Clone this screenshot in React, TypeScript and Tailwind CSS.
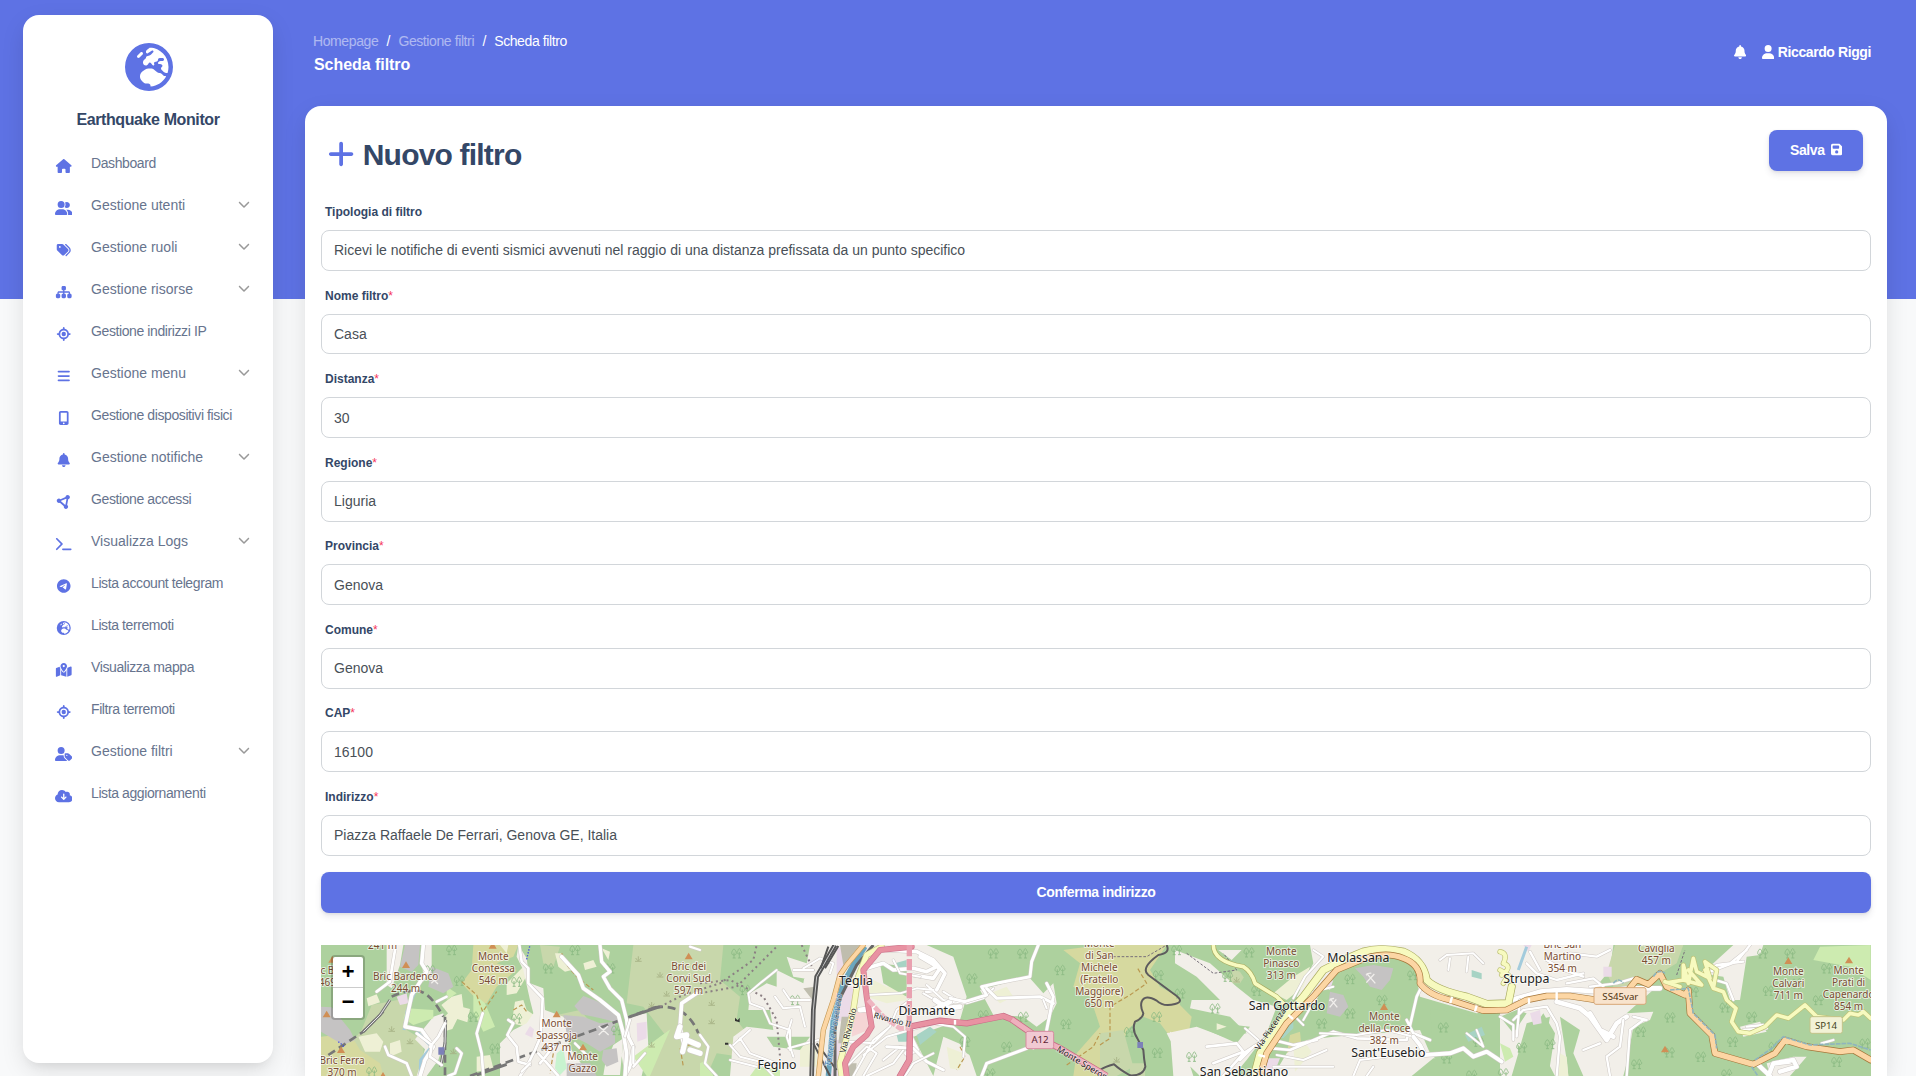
import type { ReactNode } from "react";
import type { IconType } from "react-icons";
import {
  FaBars, FaBell, FaChevronDown, FaCircleNodes, FaCloudArrowDown, FaEarthEurope, FaFloppyDisk, FaHouse,
  FaLocationCrosshairs, FaMapLocationDot, FaMobileScreenButton, FaPlus, FaSitemap, FaTags, FaTelegram,
  FaTerminal, FaUser, FaUserGroup, FaUserTag,
} from "react-icons/fa6";

const nav: [string, IconType, boolean][] = [
  ["Dashboard", FaHouse, false],
  ["Gestione utenti", FaUserGroup, true],
  ["Gestione ruoli", FaTags, true],
  ["Gestione risorse", FaSitemap, true],
  ["Gestione indirizzi IP", FaLocationCrosshairs, false],
  ["Gestione menu", FaBars, true],
  ["Gestione dispositivi fisici", FaMobileScreenButton, false],
  ["Gestione notifiche", FaBell, true],
  ["Gestione accessi", FaCircleNodes, false],
  ["Visualizza Logs", FaTerminal, true],
  ["Lista account telegram", FaTelegram, false],
  ["Lista terremoti", FaEarthEurope, false],
  ["Visualizza mappa", FaMapLocationDot, false],
  ["Filtra terremoti", FaLocationCrosshairs, false],
  ["Gestione filtri", FaUserTag, true],
  ["Lista aggiornamenti", FaCloudArrowDown, false],
];

const fields: [string, string, boolean][] = [
  ["Tipologia di filtro", "Ricevi le notifiche di eventi sismici avvenuti nel raggio di una distanza prefissata da un punto specifico", false],
  ["Nome filtro", "Casa", true],
  ["Distanza", "30", true],
  ["Regione", "Liguria", true],
  ["Provincia", "Genova", true],
  ["Comune", "Genova", true],
  ["CAP", "16100", true],
  ["Indirizzo", "Piazza Raffaele De Ferrari, Genova GE, Italia", true],
];

function Road({ d, w, fill, edge, edgeW = 4 }: { d: string; w: number; fill: string; edge: string; edgeW?: number }) {
  return (
    <g fill="none" strokeLinejoin="round" strokeLinecap="round">
      <path d={d} stroke={edge} strokeWidth={w + edgeW} />
      <path d={d} stroke={fill} strokeWidth={w} />
    </g>
  );
}
const White = ({ d, w = 7 }: { d: string; w?: number }) => <Road d={d} w={w} fill="#ffffff" edge="#cfcac6" edgeW={3} />;

function Trees({ at }: { at: [number, number][] }) {
  return (
    <g fill="none" stroke="#8bb983" strokeWidth="2.6">
      {at.map(([x, y]) => (
        <path key={`${x}-${y}`} transform={`translate(${x} ${y})`} d="M-8 14V-2M-12 14h9M-8 5c-9 0-8-8-4-14c2-5 6-5 8 0c4 6 5 14-4 14M8 14V-4M4 14h9M8 2c-9 0-7-7-4-10c1-8 7-8 8 0c4 3 5 10-4 10" />
      ))}
    </g>
  );
}
function Scrubs({ at }: { at: [number, number][] }) {
  return (
    <g fill="none" stroke="#a5b083" strokeWidth="2.5">
      {at.map(([x, y]) => (
        <path key={`${x}-${y}`} transform={`translate(${x} ${y})`} d="M-10 6H10M0 5V-9M-2 4L-8-4M2 4L8-4" />
      ))}
    </g>
  );
}
function Peaks({ at }: { at: [number, number][] }) {
  return (
    <g fill="#d08f55">
      {at.map(([x, y]) => (
        <path key={`${x}-${y}`} d={`M${x} ${y - 10}l12 20h-24z`} />
      ))}
    </g>
  );
}
function Label({ x, y, lines, town }: { x: number; y: number; lines: string[]; town?: boolean }) {
  return (
    <g
      className="font-['Noto_Sans',sans-serif]"
      textAnchor="middle"
      fontSize={town ? 37 : 30}
      fill={town ? "#222222" : "#7a4d33"}
      stroke="#ffffff"
      strokeOpacity="0.65"
      strokeWidth="6"
      strokeLinejoin="round"
      paintOrder="stroke"
    >
      {lines.map((t, i) => (
        <text key={i} x={x} y={y + i * 36}>{t}</text>
      ))}
    </g>
  );
}
const Tile = ({ i, children }: { i: number; children: ReactNode }) => <g transform={`translate(${i * 1200} 0)`}>{children}</g>;

const forest = "#add19e", scrub = "#c8d7ab", heath = "#d6d99f", urban = "#f2efe9", grass = "#cdebb0", farm = "#eef0d5", quarry = "#c5c3c3", lilac = "#ebdbe8";

function TerrainMap() {
  return (
    <svg className="block h-full w-full" viewBox="63 75 4650 393" preserveAspectRatio="none">
      <rect x="63" y="75" width="4650" height="393" fill={forest} />

      {/* Land cover */}
      <Tile i={0}>
        <path fill={scrub} d="M215 255L320 235L320 330L370 360L370 468H230L190 420L130 395L185 330z M1000 75H1200V468H1050L1100 350L1030 260L980 250z M770 285L840 270L900 340L850 360L790 310z M720 75l60 5l-20 60l-30 -10z" />
        <path fill={heath} d="M520 75H655L640 110L590 130L650 150L590 200L560 250L540 250L485 190L515 150z M63 350L150 340L180 390L240 430L250 468H63z M1150 380l50-40v100l-30 28h-40z" />
        <path fill={farm} d="M200 235l30-12l10 24l-35 12z M455 230l30-8l5 40l20 5l-8 40l-30-10l-15 30l-28 8l-10-30l25-25l-20-25z M175 350l55-10l20 25l-10 30l-45 0z M270 370l30-10l5 35l-35 15z M765 100l20 0l30 50l-20 5l-20-15z M850 130l30-10l10 20l-35 10z M600 75h25l-5 25z M620 190l50-50l20 10l-40 70l-30 5z M645 245l25-5l10 30l30 20l-30 30l-45-10z M905 85l25 10l-5 25z M530 410l40-5l10 40l-50 10z" />
        <path fill={urban} d="M655 75L680 115L690 190L730 205L735 270L790 290L830 330L800 380L730 415L690 468H600L600 370L640 330L680 310L700 280L690 240L670 150L650 110z M260 75h50l-10 60l-25 70l-15-10z M365 75h30v80l-25 30z M400 290l30-10l5 80l-20 60l-35 48h-30l25-80l-30-30z M980 290l60-10l5 100l-20 88h-50l-10-60z M940 375l30-20l-10 110h-50l5-30z M1140 260l30-40l30-10v60l-40 60z M720 350l80 20l70 98h-180z" />
        <path fill={grass} d="M320 265l80 5l0 25l-60 20l-30-20z M520 220l35 30l30 70l-35 15l-30-60z M1000 410L1080 350L1150 300L1165 330L1130 400L1080 468H1040z M440 200l30 20l-30 20z" />
        <path fill={quarry} d="M63 260L95 262L150 330L165 360L130 375L63 335z M315 75h45l-5 60l-20 20l-35-15z M395 140l50 20l15 40l-30 20l-45-20z M850 228l40 15l70 40l-5 25l-60 -15l-50-10l-22-25z M790 285L850 290L900 310L945 305L945 370L900 395L860 370L800 340z M910 390l40-5l5 40l-35 15l-15-20z M800 430h70l20 38h-90z" />
        <path fill={lilac} d="M690 318l12 10l-5 25l-22-10z M1010 310l30-5l0 50l-28 10z M290 230l30-10l5 30l-25 5z" />
        <path fill="#c8f3cf" d="M770 400l20-15l10 60l-20 20l-15-20z" />
      </Tile>
      <Tile i={1}>
        <path fill={scrub} d="M0 75H70L60 180L120 230L110 300L140 340L120 410L50 400L20 468H-150L-60 260z M300 210l40-10v70l-30 0z" />
        <path fill={urban} d="M230 150L310 190L330 75H680L760 110L800 230L780 300L640 350L700 468H90L100 350L140 320L220 330L210 270L145 270L150 220L200 190L230 200z M260 110l60 20l20 50l-60-10z M840 210l90-25l60-10l40 45l30-30l10 60l-20 40l-40 30l-40-30l-90-5z M730 350l70 30l30 88H700z" />
        <path fill={farm} d="M520 180l40 20l40-10l20 50l-60 10l-60-20z M870 220l50-20l20 30l-40 20z M740 380l50 20l-10 50l-30-5z M300 360l50 20l0 60l-50 0z" />
        <path fill={forest} d="M640 360L730 330L880 330L990 400L850 430L800 400L760 345z M540 130l80 10v90l-70-40z M200 350l130 0l-30 40l-80-10z" />
        <path fill={heath} d="M1090 90L1200 75V468H1120L1130 400L1200 320L1170 230L1120 200L1140 130z" />
        <path fill={lilac} d="M410 85l50-5l-20 70l-30 20z M430 200h30v100l-50 5z M405 360h30l-10 108h-30z" />
        <path fill="#f5d5d5" d="M465 260l35 10l5 60l-50 20z" />
        <path fill="#bfbdae" d="M420 75h60l-50 60z M425 290h30l-20 80h-20z M310 205l35-5v50z M440 430h30l-5 38h-30z" />
        <path fill="#a7d3c4" d="M585 130l35-10v25h-30z M590 345l40-15l-10 35l-25 0z M650 345l40-25l20 15l-50 40z" />
        <path fill={grass} d="M0 430l20-10l20 48H0z M170 440l70 8v20h-90z" />
      </Tile>
      <Tile i={2}>
        <path fill={heath} d="M0 75H200L150 150L180 200L235 230L240 255L275 290L255 400L225 370L180 310L130 290L80 330L60 420H0z M570 345l30-10l5 50l-35 10l10 70h-40l20-60z" />
        <path fill={scrub} d="M0 340L70 330L100 440L50 468H0z M400 150l40 10l-20 30l-40 0z M90 430h45v38h-45z" />
        <path fill={urban} d="M225 90L330 130L410 200L460 240L530 260L500 340L440 420L400 468H300L230 400L200 340L290 320L370 350L440 340L390 290L270 265L275 240L360 240L290 170L225 130z M630 75H1200V270L1130 280L960 230L940 120L850 100L720 150L620 250L590 230L640 130z M700 350L960 330L990 400L1060 468H520L560 400L620 360z M210 335l30 10l40 123h-60z M355 90l70 0l-30 30z" />
        <path fill={forest} d="M410 140L470 160L540 230L460 215z M990 265L1130 290L1200 300V400L1100 380L1000 395z M300 320l60-10l90 10l-40 50z M935 468L1000 415L1140 410L1200 430V468z" />
        <path fill={quarry} d="M765 145L820 135L880 145L870 180L845 210L810 200L790 170z M690 215L730 225L745 260L720 290L680 280z" />
        <path fill={lilac} d="M500 415h40l-20 50h-30z M670 200l30-20l-10 30z" />
        <path fill="#a7d3c4" d="M530 350l50-50v25l-30 30z M1115 150l30 10v18l-30-8z M1095 345l50-25l10 25l-50 20z" />
        <path fill={farm} d="M580 170l50-30l-20 60l-50 40l-40-20z M580 375l40 0l15 20l-50 60z M350 310l30 10l-30 10z" />
      </Tile>
      <Tile i={3}>
        <path fill={urban} d="M0 75H340L330 150L280 210L470 200L380 280L460 275L450 300L400 320L380 430L370 468H250L220 400L240 330L180 290L200 420L205 468H165L130 400L150 290L80 310L60 380L0 320z M640 130L700 75H790L780 105L740 110L720 240L690 240L670 170L600 160z M720 320l60-15l20 30l-70 15z M800 430l80-20l40 0l-50 58h-60z M0 310l50 40l5 50l-20 68H0z" />
        <path fill={scrub} d="M345 75H550L530 130L480 160L400 200L340 200L320 160z M800 130z" />
        <path fill={forest} d="M0 290l50-20l30 10l-40 60z M60 380l70-100l35 60l-20 128H60z" />
        <path fill={grass} d="M0 370l30 15l10 25l-25 15z M940 120L960 80L1112 75V180L1050 140z" />
        <path fill={farm} d="M180 400l20 10l5 58h-30z" />
        <path fill={lilac} d="M90 280l30-10l5 40l-25 5z M310 140l25 0v30h-25z M70 75h25l-10 20z" />
      </Tile>

      {/* Vegetation symbols */}
      <g>
        <Trees at={[[390, 150], [478, 182], [455, 90], [745, 145], [825, 90], [930, 145], [520, 290], [650, 185], [650, 295], [585, 385], [950, 330], [215, 455], [160, 250]]} />
        <Scrubs at={[[275, 328], [330, 365], [460, 395], [1015, 118], [1080, 165], [1100, 222], [1055, 255], [1055, 375], [1235, 250], [1235, 305]]} />
        <Trees at={[[1310, 100], [1335, 210], [1485, 240], [2080, 100], [2168, 100], [2016, 175], [2280, 150], [2170, 290], [2298, 312], [1995, 365], [2120, 380], [2050, 285], [2070, 460]]} />
        <Trees at={[[2575, 165], [2640, 220], [2570, 290], [2488, 335], [2572, 398], [2675, 410], [2847, 97], [2630, 90], [2783, 170], [3150, 177], [3246, 240], [3150, 280], [3065, 310], [3338, 165], [3430, 322], [3535, 365], [3440, 415], [2870, 212], [2745, 265], [3515, 465]]} />
        <Scrubs at={[[2450, 420], [2810, 180]]} />
        <Trees at={[[3750, 372], [4110, 292], [4022, 335], [4010, 432], [4108, 397], [4202, 410], [4298, 365], [4422, 380], [4610, 425], [4355, 290], [4275, 262], [4405, 212], [4490, 190], [4470, 100], [4580, 145], [4555, 240], [4280, 462], [4180, 215], [4388, 100], [4695, 370], [3665, 382], [3610, 460]]} />
      </g>

      {/* Watercourses, railways and footpaths */}
      <g fill="none" strokeLinejoin="round">
        <path stroke="#a3cbdc" strokeWidth="9" d="M345 215L322 270L312 330M360 470L362 420L395 380L350 335 M3655 150L3680 80" />
        <path stroke="#6ba6bd" strokeWidth="16" d="M1695 80L1660 135L1630 190L1600 300L1585 468" />
        <path stroke="#777777" strokeWidth="8" strokeDasharray="24 14" d="M85 405L190 335L250 275M275 230Q310 212 350 212Q390 215 430 290M435 290V468M510 468L1065 262M1065 262Q1160 250 1195 340" />
        <path stroke="#777777" strokeWidth="9" d="M190 335L240 285L270 240M437 300L435 370L422 440M990 290L1080 260M530 465L620 433" />
        <path stroke="#ffffff" strokeWidth="2.5" d="M190 335L240 285L270 240M437 300L435 370L422 440" />
        <path stroke="#8b7f83" strokeWidth="6" strokeDasharray="6 10" d="M1080 260L1150 225L1260 190L1360 120L1370 75M1200 190L1290 180L1390 230L1430 300L1440 410M1200 220L1310 200L1430 80M1505 75L1545 160" />
        <path stroke="#444ee0" strokeWidth="4" strokeDasharray="4 5" d="M680 118L690 75M115 365L135 382" />
        <path stroke="#ba9850" strokeWidth="3.5" strokeDasharray="13 7" d="M485 185L530 225L548 275L590 215M785 100L800 135L830 170L880 210M640 270l25-15l15 20M1195 370L1140 380L1150 440M2400 375L2430 355L2430 260L2490 225L2540 190L2510 140M2300 435L2380 380L2400 340M1980 380L1995 410L1970 450M760 400l-10 60" />
        <path stroke="#77707a" strokeWidth="3" strokeDasharray="8 5" d="M2400 110H2540L2600 75M2660 100L2740 160L2810 150L2770 100M4130 165L4155 90" />
      </g>

      {/* Minor roads */}
      <White w={11} d="M370 75L365 130L380 155L335 225L315 320L365 330L400 380L375 420L360 468" />
      <White w={8} d="M658 75L665 125L685 145L685 190L728 235L722 350L705 390L680 440L660 468M285 90L275 150L270 185L230 215M350 340L395 375L390 410L425 435M255 380L265 405L320 430L335 468M548 280L530 340L545 400L550 468M625 300L640 310L622 345L650 380L655 425L690 435M435 310L415 350L390 380M470 385l15 15l-20 60l-20 8M720 430l40-50M715 400l60 68" />
      <White w={10} d="M900 75L905 125L930 155L910 170L930 205L965 240L980 300L985 350L1000 380L990 440L975 468" />
      <White w={11} d="M785 110L835 165L850 205L900 240L955 285L970 340L980 400L975 468M1190 220L1145 250L1140 320L1150 370" />
      <White w={16} d="M1140 320L1130 350L1160 345L1148 395M1160 360L1195 375M1170 390L1200 400" />
      <White w={7} d="M990 300L975 350M1000 380L1000 430M1035 400L1000 440M1200 90L1170 80M825 370l45 45M690 430l-25 25M440 230l-30 15M1200 345L1225 380L1215 430L1250 468" />
      <White w={6} d="M1430 150L1380 190L1345 220L1350 250L1390 265L1410 310L1470 330L1470 390M1425 230L1450 265L1500 260L1515 320M1475 300L1460 350L1480 410M1290 375L1320 410L1380 425L1420 468M1290 420L1370 440M1320 355L1350 400L1430 430M1510 145L1560 115L1600 130L1590 160M1480 150H1540M1450 210L1470 240L1530 240M1555 360l-90 25M1350 330l-50 45" />
      <White w={11} d="M1700 145L1750 130L1780 150L1840 145L1880 155L1910 140M1760 90L1850 95L1900 120L1935 160L1910 210L1880 215M1840 165L1900 175L1920 145L1860 110" />
      <White w={6} d="M1700 225L1800 220L1850 205L1900 210M1830 240L1790 270L1770 320L1720 360L1660 468M1650 365L1720 370L1770 320M1690 405L1760 350L1830 330M1640 440L1700 380L1730 400L1690 468M1750 420L1800 380L1850 390M1700 468L1780 430L1810 390M1880 195L1930 240L2000 250L2050 235L2080 205M1870 220L1940 260L1970 240L1930 215" />
      <White w={15} d="M1680 270L1720 265L1715 290M1905 240L1940 265L1980 260M1900 270L1950 245M1830 350L1850 390L1820 400" />
      <White w={9} d="M1950 235L1995 245L2060 225L2045 200L2090 190L2190 170L2195 125L2215 75M2240 190L2260 230L2240 330M2045 468L2060 430L2180 385M2060 205L2090 235L2220 230L2260 250M1760 380L1840 385L1880 425L1930 450" />
      <White w={6} d="M1830 330L1900 310L1960 320L1995 350L1990 410M1815 468L1840 430L1900 400M1780 120L1800 160L1860 170M2230 240L2240 265M2200 385l30-30" />
      <White w={8} d="M2770 468L2830 400L2900 355L2980 375L3050 360M2820 420L2860 380L2970 390L3100 335L3170 355L3320 360L3350 230L3365 200M3320 300L3340 340L3390 360M2720 380L2810 370L2830 395L2740 430" />
      <White w={6} d="M2980 235L3015 170L3070 110L3040 90M3000 260L3040 215L3100 200M3010 300L3050 230M2985 290L3010 315M3420 120L3440 105L3520 100L3550 130M3445 150L3450 115M3500 155L3505 110M2930 405L3010 420L3080 390M2920 440L3100 440M3160 468L3180 420L3260 410M3200 468L3220 440M2835 325L2875 360M3060 340L3170 345L3260 330L3340 350M3500 340L3550 380L3530 330" />
      <White w={12} d="M3340 350L3360 375L3375 405L3450 400L3490 385L3520 410L3560 395L3605 425" />
      <White w={14} d="M3635 240L3720 215L3800 208L3900 215L3990 205L4080 205M3770 245L3840 265L3870 290L3920 360L3950 310L3980 290M3870 280L3900 330L3940 350" />
      <White w={7} d="M3680 130L3710 160L3770 180L3850 160M3740 120L3790 150L3850 170M3640 300L3670 270L3740 260L3770 310L3780 350L3770 468M3970 300L3960 380L3920 410L3930 468M4030 300L3990 330L3980 468M3850 390L3900 370M3650 350L3660 240M3800 190L3880 175L3910 200M3870 200L3950 190L4000 175M3600 290L3640 315L3640 360M4000 290L4040 300M3810 100L3890 110L3930 90M3690 95L3720 150" />
      <White w={7} d="M4230 155L4310 125L4350 75M4230 140L4290 130L4340 90M4230 175L4280 190L4300 240M4250 135L4330 125M4340 320L4390 315M4330 330L4400 325M4565 370l35-10" />
      <White w={13} d="M4370 430L4410 468M4405 468L4420 430L4480 420L4490 440L4440 455M4430 430L4470 425" />

      {/* Railways along the valley */}
      <g fill="none">
        <path stroke="#555555" strokeWidth="14" d="M1605 75L1550 170L1540 270L1535 468" />
        <path stroke="#e5e5e5" strokeWidth="2.5" d="M1605 75L1550 170L1540 270L1535 468" />
        <path stroke="#555555" strokeWidth="6" d="M1585 80L1562 145M1615 78L1575 145M1540 370L1590 468M1550 370L1610 450" />
        <path stroke="#666666" strokeWidth="9" d="M1720 75L1670 135L1620 235L1605 330V468" />
        <path stroke="#5d5b5d" strokeWidth="6" strokeLinejoin="round" d="M2600 75Q2612 100 2575 105Q2520 145 2545 165L2630 228Q2652 245 2625 252Q2590 262 2570 242Q2535 222 2525 245Q2520 260 2530 280Q2528 295 2505 305Q2495 330 2512 355L2530 390Q2532 420 2536 440Q2530 468 2490 466Q2460 450 2442 433Q2415 440 2400 450" />
      </g>

      {/* Main roads */}
      <Road w={12} fill="#fcd6a4" edge="#c49a56" d="M1690 75L1640 135L1620 165L1600 240L1570 330L1555 468" />
      <Road w={15} fill="#f7fabf" edge="#c4c580" d="M1745 80L1700 105L1675 170L1660 270L1640 350L1620 430L1625 468" />
      <Road w={14} fill="#e892a2" edge="#d27a91" d="M1835 80L1740 90L1690 150L1700 230L1715 320L1700 345L1660 380L1635 430L1640 468" />
      <Road w={15} fill="#e892a2" edge="#c86d86" d="M1800 468L1828 420L1830 320L1920 302L2000 310L2050 300L2110 288L2135 298" />
      <path d="M1828 75V315" fill="none" stroke="#e9a1b0" strokeWidth="16" strokeDasharray="34 8" />
      <path d="M1705 240L1750 290L1800 325L1830 325" fill="none" stroke="#efb5c1" strokeWidth="14" strokeDasharray="24 5" />
      <path d="M2135 298L2210 350L2280 385L2420 468" fill="none" stroke="#c96b84" strokeWidth="20" />
      <path d="M2135 298L2210 350L2280 385L2420 468" fill="none" stroke="#efb0bd" strokeWidth="15" />
      <path d="M1965 300v14" stroke="#fff" strokeWidth="7" />

      <Road w={11} fill="#f7fabf" edge="#a9ab60" d="M2740 75Q2740 125 2830 140Q2855 155 2865 190L2930 230L2950 250" />
      <Road w={20} fill="#f7fabf" edge="#a9ab60" d="M2862 468L2880 400L2940 310L3010 230L3070 150L3130 120L3190 95Q3240 80 3310 95Q3370 120 3380 180Q3410 210 3500 230L3560 252L3625 250L3635 200" />
      <Road w={16} fill="#fcd6a4" edge="#a5763a" d="M2880 468L2900 400L2960 310L3040 230L3110 150L3170 125Q3250 90 3310 115Q3365 135 3360 190Q3385 225 3450 240L3550 272L3620 270L3680 240L3740 228L3810 228L3890 240L3950 235L3985 210L4010 178L4045 193L4080 160L4100 200L4155 225L4165 210L4170 280L4235 345L4245 400L4360 433L4425 400L4455 360L4520 380L4620 395L4660 390L4712 420" />
      <path d="M3940 190q15-20 30 0M4060 170q15-25 35-10M4110 210L4165 205L4180 280L4245 345L4250 385M4365 420L4415 385L4450 350L4530 375L4650 370L4712 390M4355 440l20 30" fill="none" stroke="#8fb5bd" strokeWidth="5" strokeDasharray="14 3" />
      <Road w={12} fill="#f7fabf" edge="#bfc277" d="M3600 95Q3625 100 3610 130Q3640 140 3605 165M3600 150L3625 165L3610 190" />
      <Road w={11} fill="#f7fabf" edge="#bfc277" d="M4095 185L4140 200M4105 188L4150 180L4150 135L4165 190L4180 115L4190 155L4230 175L4215 125L4250 150L4240 205L4270 215L4280 240L4308 265L4295 305L4315 335L4350 340L4395 320L4430 285L4465 295L4515 255L4550 290L4630 300L4650 280L4675 285L4690 275L4712 295M4150 180L4205 195L4165 150M4215 150L4240 205" />
      <path d="M3456 230l-5 20M3530 256l-5 18M3770 210v32M3687 235v18M2965 285l14 12M2875 405l20 5" stroke="#fff" strokeWidth="7" />

      {/* Stations and mines */}
      <path fill="#7c80b8" d="M415 382h18v22h-18zM2512 366h17v18h-17z" />
      <path stroke="#f1efec" strokeWidth="4" fill="none" d="M392 170l22 22m0-22l-20 20M896 318l30 27m-2-27l-28 27M3200 160l26 30m-3-28l-24 26M3198 166q8-8 16-6M3090 236l22 26m-3-24l-20 24M3088 242q8-8 14-6" />
      <path fill="#333" d="M1305 293l8 8l6-8v14l-14-4zM1275 368h10v6h-10z" />
      <Peaks at={[[97, 118], [318, 134], [578, 76], [80, 282], [123, 389], [770, 282], [849, 381], [249, 466], [1166, 108], [3252, 260], [4465, 122], [4647, 120], [4095, 387]]} />

      {/* Place names */}
      <Label x={248} y={88} lines={["241 m"]} />
      <Label x={317} y={179} lines={["Bric Bardenco", "244 m"]} />
      <Label x={580} y={120} lines={["Monte", "Contessa", "546 m"]} />
      <Label x={82} y={161} lines={["c B", "469"]} />
      <Label x={126} y={432} lines={["Bric Ferra", "370 m"]} />
      <Label x={770} y={322} lines={["Monte", "Spassoja", "437 m"]} />
      <Label x={848} y={420} lines={["Monte", "Gazzo"]} />
      <Label x={1166} y={151} lines={["Bric dei", "Corvi Sud", "597 m"]} />
      <Label x={2398} y={82} lines={["Monte", "di San", "Michele", "(Fratello", "Maggiore)", "650 m"]} />
      <Label x={2944} y={105} lines={["Monte", "Pinasco", "313 m"]} />
      <Label x={3253} y={301} lines={["Monte", "della Croce", "382 m"]} />
      <Label x={3787} y={83} lines={["Bric San", "Martino", "354 m"]} />
      <Label x={4069} y={97} lines={["Caviglia", "457 m"]} />
      <Label x={4465} y={165} lines={["Monte", "Calvari", "711 m"]} />
      <Label x={4646} y={161} lines={["Monte", "Prati di", "Capenardo", "854 m"]} />
      <Label town x={1668} y={194} lines={["Teglia"]} />
      <Label town x={1880} y={285} lines={["Diamante"]} />
      <Label town x={1431} y={448} lines={["Fegino"]} />
      <Label town x={3175} y={125} lines={["Molassana"]} />
      <Label town x={2961} y={270} lines={["San Gottardo"]} />
      <Label town x={3265} y={410} lines={["Sant'Eusebio"]} />
      <Label town x={2832} y={467} lines={["San Sebastiano"]} />
      <Label town x={3679} y={189} lines={["Struppa"]} />

      {/* Street names and road shields */}
      <g className="font-['Noto_Sans',sans-serif]" fontSize="25" fill="#222" stroke="#fff" strokeOpacity="0.5" strokeWidth="4" paintOrder="stroke">
        <text transform="translate(1636 400) rotate(-76)">Via Rivarolo</text>
        <text transform="translate(1592 440) rotate(-81)" fill="#4c7fae" fontStyle="italic" fontSize="27">Torrente Polcevera</text>
        <text transform="translate(1720 293) rotate(15)" fontSize="24">Rivarolo II</text>
        <text transform="translate(2268 392) rotate(31)" fontSize="26">Monte Sperone</text>
        <text transform="translate(2878 392) rotate(-56)">Via Piacenza</text>
      </g>
      <g className="font-['Noto_Sans',sans-serif]" fontSize="29" textAnchor="middle">
        <rect x="2178" y="334" width="83" height="52" rx="6" fill="#f1c9d2" stroke="#d78ba0" strokeWidth="3" />
        <text x="2220" y="370" fill="#5c1f34">A12</text>
        <rect x="3882" y="203" width="156" height="50" rx="6" fill="#f8e3cc" stroke="#d8a878" strokeWidth="3" />
        <text x="3961" y="240" fill="#4f3310">SS45var</text>
        <rect x="4530" y="290" width="97" height="50" rx="6" fill="#f2f2d6" stroke="#c3c388" strokeWidth="3" />
        <text x="4578" y="327" fill="#44441c">SP14</text>
      </g>
    </svg>
  );
}

function Sidebar() {
  return (
    <aside className="mt-[15px] ml-[23px] h-[1048px] w-[250px] shrink-0 rounded-2xl bg-white shadow-[0_8px_26px_-4px_rgba(20,20,20,0.15),0_8px_9px_-5px_rgba(20,20,20,0.06)]">
      <div className="flex flex-col items-center pt-7">
        <FaEarthEurope className="size-12 translate-x-px text-[#5e72e4]" />
        <h1 className="mt-[17px] text-base leading-6 font-bold tracking-[-0.4px] text-[#344767]">Earthquake Monitor</h1>
      </div>
      <nav className="mt-[10px]">
        {nav.map(([label, Icon, expandable]) => (
          <a key={label} className="flex h-[42px] items-center pr-6 pl-[24.5px] text-sm text-[#67748e]">
            <span className="mt-[5px] flex w-8 justify-center text-[#5e72e4]">
              <Icon className="h-3.5 w-[17.5px] shrink-0" />
            </span>
            <span className={expandable ? "ml-[11.5px] whitespace-nowrap" : "ml-[11.5px] tracking-[-0.4px] whitespace-nowrap"}>{label}</span>
            {expandable && <FaChevronDown size={12} className="-mr-px mb-0.5 ml-auto text-[#999999]" />}
          </a>
        ))}
      </nav>
    </aside>
  );
}

export default function App() {
  return (
    <div className="h-[1076px] overflow-hidden bg-[linear-gradient(#5e72e4_299px,#f8f9fa_299px)] font-['Liberation_Sans',Arial,sans-serif]">
      <div className="flex h-full">
        <Sidebar />
        <main className="ml-8 flex w-[1582px] flex-col">
          <header className="flex h-[106px] shrink-0 items-start justify-between pr-4 pl-2 text-white">
            <div className="pt-[31px]">
              <div className="flex gap-[8.3px] text-sm leading-5 tracking-[-0.4px]">
                <span className="opacity-50">Homepage</span>
                <span>/</span>
                <span className="opacity-50">Gestione filtri</span>
                <span>/</span>
                <span>Scheda filtro</span>
              </div>
              <h6 className="ml-px text-base leading-7 font-bold tracking-[-0.05px]">Scheda filtro</h6>
            </div>
            <div className="flex items-center pt-[42px] text-sm leading-5 font-bold tracking-[-0.4px]">
              <FaBell className="mr-4 h-3.5 w-[12.25px]" />
              <FaUser className="mr-[3.5px] h-3.5 w-[12.25px]" />
              <span>Riccardo Riggi</span>
            </div>
          </header>
          <section className="flex flex-1 flex-col rounded-t-2xl bg-white px-4 shadow-[0_8px_26px_-4px_rgba(20,20,20,0.15),0_8px_9px_-5px_rgba(20,20,20,0.06)]">
            <div className="flex h-[97px] shrink-0 items-start justify-between pt-6 pr-2 pl-[7px]">
              <h3 className="mt-1 flex items-center gap-[8.5px] text-[30px] leading-[42px] font-bold tracking-[-0.8px] text-[#344767]">
                <FaPlus className="-mt-0.5 h-[30px] w-[26.25px] text-[#5e72e4]" />
                Nuovo filtro
              </h3>
              <button className="flex h-[41px] w-[94px] items-center justify-center gap-1.5 rounded-lg bg-[#5e72e4] pb-0.5 text-sm font-bold tracking-[-0.4px] text-white shadow-[0_4px_6px_rgba(50,50,93,0.1),0_1px_3px_rgba(0,0,0,0.08)]">
                Salva
                <FaFloppyDisk className="h-[13px] w-[11.4px]" />
              </button>
            </div>
            {fields.map(([label, value, required]) => (
              <div key={label} className="h-[83.57px] shrink-0">
                <label className="ml-1 block h-[27.1px] text-xs leading-[18px] font-bold text-[#344767]">
                  {label}
                  {required && <span className="font-normal text-[#f5365c]">*</span>}
                </label>
                <input readOnly value={value} className="block h-[40.8px] w-full rounded-lg border border-[#d2d6da] bg-white px-3 text-sm text-[#495057] outline-none" />
              </div>
            ))}
            <button className="mt-[0.3px] h-[41px] shrink-0 rounded-lg bg-[#5e72e4] text-sm font-bold tracking-[-0.4px] text-white shadow-[0_4px_6px_rgba(50,50,93,0.1),0_1px_3px_rgba(0,0,0,0.08)]">
              Conferma indirizzo
            </button>
            <div className="relative mt-8 h-[131px] shrink-0">
              <TerrainMap />
              <div className="absolute top-2.5 left-2.5 w-[34px] overflow-hidden rounded border-2 border-black/20 bg-white bg-clip-padding font-['Liberation_Mono',monospace] text-[22px] font-bold text-black">
                <div className="flex h-[31px] items-center justify-center border-b border-[#cccccc] pt-[3px]">+</div>
                <div className="flex h-[30px] items-center justify-center pt-px">−</div>
              </div>
            </div>
          </section>
        </main>
      </div>
    </div>
  );
}
